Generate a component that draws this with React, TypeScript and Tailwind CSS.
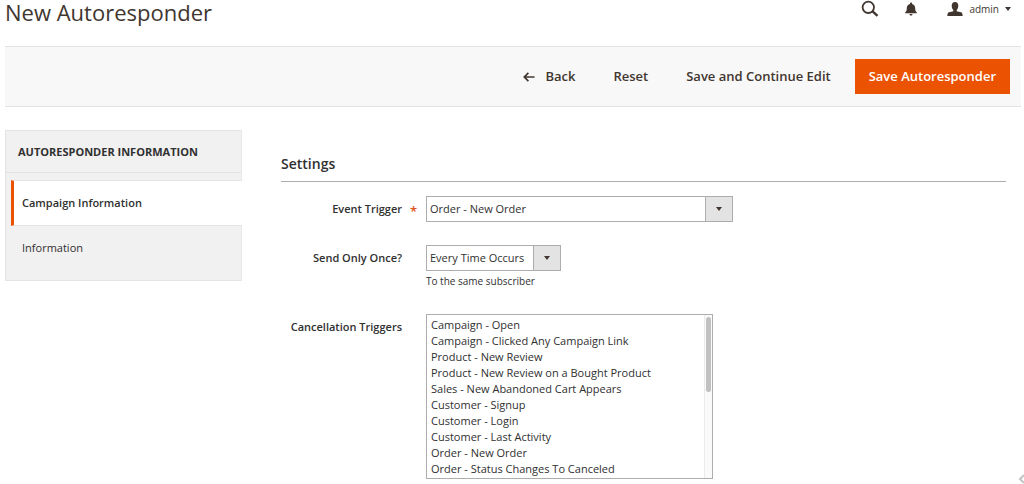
import { ReactNode, UIEvent, useState } from "react";

interface Option {
    value: string;
    label: string;
}

interface FieldProps {
    id: string;
    label: string;
    required?: boolean;
    note?: string;
    children: ReactNode;
}

interface SelectProps {
    id: string;
    options: Option[];
    className?: string;
}

const eventOptions: Option[] = [
    { value: "order_new", label: "Order - New Order" },
    { value: "customer_signup", label: "Customer - Signup" },
    { value: "customer_login", label: "Customer - Login" },
];

const onceOptions: Option[] = [
    { value: "0", label: "Every Time Occurs" },
    { value: "1", label: "Only Once" },
];

const cancellationTriggers = [
    "Campaign - Open",
    "Campaign - Clicked Any Campaign Link",
    "Product - New Review",
    "Product - New Review on a Bought Product",
    "Sales - New Abandoned Cart Appears",
    "Customer - Signup",
    "Customer - Login",
    "Customer - Last Activity",
    "Order - New Order",
    "Order - Status Changes To Canceled",
    "Order - Status Changes To Closed",
    "Order - Status Changes To Complete",
    "Order - Status Changes To Suspected Fraud",
    "Order - Status Changes To On Hold",
    "Order - Status Changes To Payment Review",
    "Order - Status Changes To Pending",
    "Order - Status Changes To Processing",
    "Newsletter - New Subscriber",
    "Newsletter - Unsubscribed",
    "Shipment - New Shipment",
    "Invoice - New Invoice",
];

const SearchIcon = () => (
    <svg viewBox="0 0 18 18" className="h-[18px] w-[18px]" fill="none" stroke="currentColor">
        <circle cx="7.3" cy="7.3" r="5.7" strokeWidth="1.8" />
        <path d="M11.6 11.4l4.9 4.4" strokeWidth="2.4" />
    </svg>
);

const BellIcon = () => (
    <svg viewBox="0 0 12 14" className="h-3.5 w-3" fill="currentColor">
        <path d="M6 0.6c.6 0 1 .4 1 1v.3c2 .5 3.200 2 3.200 4.100 0 2.300.3 3.400 1.500 4.300.3.3.2 1-.3 1H.6c-.5 0-.6-.7-.3-1C1.500 9.400 1.800 8.300 1.800 6c0-2.100 1.200-3.600 3.200-4.100v-.3c0-.6.4-1 1-1z" />
        <path d="M4.500 12h3c0 .9-.7 1.600-1.500 1.600s-1.500-.7-1.500-1.600z" />
    </svg>
);

const UserIcon = () => (
    <svg viewBox="0 0 16 14" className="h-3.5 w-4" fill="currentColor">
        <path d="M8 0C5.900 0 4.700 1.500 4.700 3.700c0 1.900.7 3.400 1.600 4.300v1.200L2 10.300C.9 10.600.4 11.500.4 14h15.200c0-2.500-.5-3.400-1.600-3.700L9.700 9.200V8c.9-.9 1.600-2.400 1.600-4.300C11.300 1.500 10.100 0 8 0z" />
    </svg>
);

const BackIcon = () => (
    <svg viewBox="0 0 12 10" className="h-2.5 w-3" fill="none" stroke="currentColor" strokeWidth="1.700">
        <path d="M5.400 0.800L1.300 5l4.100 4.200M1.500 5h10" />
    </svg>
);

const Caret = () => (
    <svg viewBox="0 0 6 4" className="h-1 w-1.5" fill="currentColor">
        <path d="M0 0h6L3 4z" />
    </svg>
);

const Select = ({ id, options, className = "" }: SelectProps) => (
    <div className={`grid max-w-full ${className}`}>
        <select
            id={id}
            className="col-start-1 row-start-1 h-[26px] w-full appearance-none border border-[#adadad] bg-white pr-7 pl-[3px] text-[11px]"
        >
            {options.map((option) => (
                <option key={option.value} value={option.value}>
                    {option.label}
                </option>
            ))}
        </select>
        <span className="pointer-events-none col-start-1 row-start-1 flex w-7 items-center justify-center justify-self-end border border-[#adadad] bg-[#e3e3e3] text-[#41362f]">
            <Caret />
        </span>
    </div>
);

const MultiSelect = ({ id, options }: { id: string; options: string[] }) => {
    const [thumb, setThumb] = useState({ top: 1, height: 46 });

    const handleScroll = (e: UIEvent<HTMLSelectElement>) => {
        const { scrollTop, scrollHeight, clientHeight } = e.currentTarget;
        setThumb({
            top: 1 + (scrollTop / scrollHeight) * 100,
            height: (clientHeight / scrollHeight) * 100 - 2,
        });
    };

    return (
        <div className="relative w-[287px] max-w-full">
            <select
                id={id}
                multiple
                size={10}
                onScroll={handleScroll}
                className="block h-[165px] w-full overflow-y-scroll border border-[#adadad] bg-white py-0.5 pr-2 pl-1 text-[11px] [scrollbar-width:none]"
            >
                {options.map((option) => (
                    <option key={option} value={option} className="h-4 min-h-4 p-0 leading-4">
                        {option}
                    </option>
                ))}
            </select>
            <div aria-hidden="true" className="pointer-events-none absolute inset-y-px right-px w-2 border-l border-[#ebebeb] bg-[#fafafa]">
                <div
                    className="absolute inset-x-px rounded-full bg-[#c1c1c1]"
                    style={{ top: `${thumb.top}%`, height: `${thumb.height}%` }}
                />
            </div>
        </div>
    );
};

const Field = ({ id, label, required, note, children }: FieldProps) => (
    <div className="flex">
        <label htmlFor={id} className="flex w-[145px] shrink-0 justify-end pt-1 pr-6 text-[11px] leading-[18px] font-semibold">
            <span className="relative whitespace-nowrap">
                {label}
                {required && <span className="absolute top-0.5 left-full pl-2 text-[13px] text-[#e04f20]">*</span>}
            </span>
        </label>
        <div className="min-w-0 grow">
            {children}
            {note && <p className="mt-[3px] text-[10px] leading-[14px]">{note}</p>}
        </div>
    </div>
);

const App = () => {
    return (
        <div className="relative min-h-screen bg-white pl-[5px] font-['Open_Sans','Liberation_Sans',sans-serif] text-[#303030]">
            <header className="flex h-[46px] items-start justify-between pr-[13px] text-[#41362f]">
                <h1 className="text-[22px] leading-6">New Autoresponder</h1>
                <div className="flex h-[18px] items-center">
                    <button aria-label="Search" className="mr-[26px]">
                        <SearchIcon />
                    </button>
                    <button aria-label="Notifications" className="mr-[30px]">
                        <BellIcon />
                    </button>
                    <button className="flex items-center text-[10px] leading-4">
                        <UserIcon />
                        <span className="mr-1.5 ml-1.5">admin</span>
                        <Caret />
                    </button>
                </div>
            </header>

            <div className="mr-[3px] flex h-[61px] items-center justify-end border-y border-[#e3e3e3] bg-[#f8f8f8] pr-[11px] text-[13px] font-semibold text-[#41362f]">
                <button className="mr-[38px] flex items-center gap-2.5">
                    <BackIcon />
                    Back
                </button>
                <button className="mr-[38px]">Reset</button>
                <button className="mr-6">Save and Continue Edit</button>
                <button className="h-[35px] bg-[#eb5202] px-3.5 text-white">Save Autoresponder</button>
            </div>

            <div className="mt-[23px] flex items-start">
                <nav className="w-[237px] shrink-0 border border-[#e3e3e3] border-r-[#e8e8e8] bg-[#f1f1f1] pb-2.5">
                    <h2 className="mb-[7px] border-b border-[#e3e3e3] px-3 py-3 text-[11px] leading-[17px] font-bold uppercase">
                        Autoresponder Information
                    </h2>
                    <a
                        href="#campaign"
                        className="-mr-px ml-[5px] block border-y border-l-3 border-y-[#e3e3e3] border-l-[#eb5202] bg-white py-3.5 pl-2 text-[11px] leading-4 font-semibold"
                    >
                        Campaign Information
                    </a>
                    <a href="#information" className="block py-3.5 pl-4 text-[11px] leading-4">
                        Information
                    </a>
                </nav>

                <main className="mr-[18px] ml-[39px] min-w-0 grow pt-6">
                    <form>
                        <h2 className="mb-3.5 border-b border-[#adadad] pb-[7px] text-[14px] leading-5 font-semibold">Settings</h2>
                        <div className="flex flex-col">
                            <Field id="event" label="Event Trigger" required>
                                <Select id="event" options={eventOptions} className="w-[307px]" />
                            </Field>
                            <div className="h-[23px]" />
                            <Field id="send_once" label="Send Only Once?" note="To the same subscriber">
                                <Select id="send_once" options={onceOptions} className="w-[135px]" />
                            </Field>
                            <div className="h-[26px]" />
                            <Field id="cancellation" label="Cancellation Triggers">
                                <MultiSelect id="cancellation" options={cancellationTriggers} />
                            </Field>
                        </div>
                    </form>
                </main>
            </div>

            <svg viewBox="0 0 6 10" className="absolute right-0 bottom-0 h-2.5 w-1.5" fill="none" stroke="#c4c4c4" strokeWidth="2">
                <path d="M6 1L2 5l4 4" />
            </svg>
        </div>
    );
};

export default App;
